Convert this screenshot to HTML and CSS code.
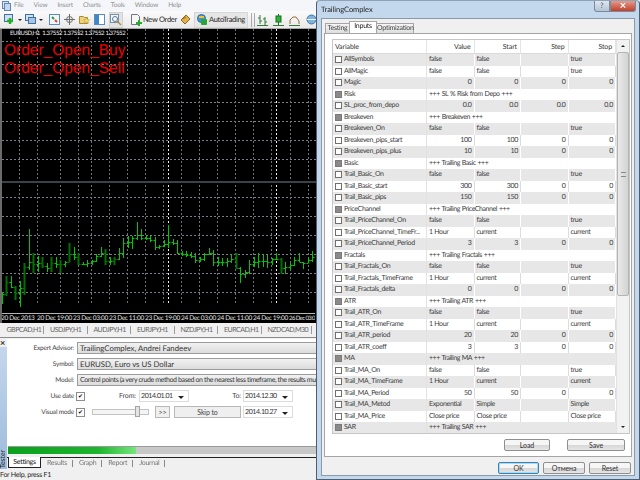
FILE: index.html
```html
<!DOCTYPE html>
<html lang="en">
<head>
    <meta charset="UTF-8">
    <title>TrailingComplex</title>
    <link rel="stylesheet" href="styles.css">
</head>
<body>
    <div class="desktop">
        <div class="terminal">
            <div class="menubar">
                <svg class="app-icon" width="9" height="10" viewBox="0 0 9 10"><rect x="0.5" y="0.5" width="6" height="7" fill="#dfe9f5" stroke="#5f86b5"/><rect x="2.5" y="2.5" width="6" height="7" fill="#c6d8ee" stroke="#5f86b5"/></svg>
                <span class="menu">File</span>
                <span class="menu">View</span>
                <span class="menu">Insert</span>
                <span class="menu">Charts</span>
                <span class="menu">Tools</span>
                <span class="menu">Window</span>
                <span class="menu">Help</span>
            </div>

            <div class="toolbar">
                <svg class="tool" width="11" height="11" viewBox="0 0 11 11"><rect x="0.5" y="0.5" width="8" height="7" fill="#cfe0f2" stroke="#3f6fa5"/><path d="M6 4v6M3 7h6" stroke="#1fae2a" stroke-width="2.4"/></svg>
                <span class="caret"></span>
                <svg class="tool tool-second" width="11" height="11" viewBox="0 0 11 11"><rect x="0.5" y="0.5" width="8" height="6" fill="#cfe0f2" stroke="#3f6fa5"/><rect x="3.5" y="3.5" width="7" height="6" fill="#a9c5e6" stroke="#3f6fa5"/></svg>
                <span class="caret"></span>
                <span class="sep"></span>
                <svg class="tool" width="11" height="11" viewBox="0 0 11 11"><rect x="0.5" y="0.5" width="10" height="10" fill="#f2f6fb" stroke="#5b8cc0"/><path d="M3 3l2 2" stroke="#2d9a3a" stroke-width="2"/><path d="M6 6l2 2" stroke="#d2452f" stroke-width="2"/></svg>
                <svg class="tool" width="11" height="11" viewBox="0 0 11 11"><circle cx="5.5" cy="5.5" r="3" fill="none" stroke="#6d6d6d"/><path d="M5.5 0v11M0 5.5h11" stroke="#6d6d6d"/></svg>
                <svg class="tool" width="11" height="11" viewBox="0 0 11 11"><path d="M0.5 2.5h4l1 1h3v6h-8z" fill="#efd27a" stroke="#a98a35"/><path d="M7.5 3.5l1 2 2 .3-1.5 1.4.4 2-1.900-1-1.900 1 .4-2-1.500-1.400 2-.3z" fill="#f3dd6a" stroke="#b09030" stroke-width="0.5"/></svg>
                <svg class="tool" width="11" height="11" viewBox="0 0 11 11"><rect x="0.500" y="0.500" width="10" height="10" fill="#fff" stroke="#5b8cc0"/><rect x="1" y="1" width="4" height="9" fill="#3f86c9"/></svg>
                <span class="tool-on"><svg width="12" height="12" viewBox="0 0 12 12"><rect x="0.5" y="0.5" width="8" height="8" fill="#f4f7fb" stroke="#7a8ea6"/><circle cx="5" cy="5" r="2.500" fill="none" stroke="#5a7a9c"/><path d="M7 7l4 4" stroke="#b08a3a" stroke-width="1.500"/></svg></span>
                <span class="sep"></span>
                <svg class="tool" width="11" height="12" viewBox="0 0 11 12"><path d="M0.500 0.500h6l2 2v8h-8z" fill="#f6f6f6" stroke="#6f7780"/><path d="M8 6v6M5 9h6" stroke="#24a82e" stroke-width="2"/></svg>
                <span class="tool-label">New Order</span>
                <svg class="tool" width="11" height="11" viewBox="0 0 11 11"><path d="M1 6l5-5 4 4-5 5z" fill="#e2b04a" stroke="#8e6a1e"/><path d="M3 5l3-2" stroke="#8e6a1e"/></svg>
                <span class="autotrading">
                    <svg width="10" height="11" viewBox="0 0 10 11"><circle cx="4.500" cy="4.500" r="4" fill="#4a93d6" stroke="#2c6aa5"/><path d="M2 3h5" stroke="#f0c23c" stroke-width="2"/><rect x="4" y="5" width="6" height="6" rx="1" fill="#2aa639"/></svg>
                    <span class="tool-label">AutoTrading</span>
                </span>
                <span class="grip"></span>
                <svg class="tool" width="11" height="12" viewBox="0 0 11 12"><path d="M3 1v9M1 4h2M3 7h2M8 3v8M6 5h2M8 8h2M0 11.500h11" stroke="#37783c" fill="none"/></svg>
                <svg class="tool tool-candle" width="11" height="12" viewBox="0 0 11 12"><path d="M5.500 0v11" stroke="#1d6b26"/><rect x="3" y="2" width="5" height="6" fill="#2fb13c" stroke="#1d6b26"/><path d="M0 11.500h11" stroke="#37783c"/></svg>
                <svg class="tool tool-candle" width="11" height="12" viewBox="0 0 11 12"><path d="M1 10V6l3-3h3l3 4v3" stroke="#9a6a3a" fill="none"/><path d="M0 11.500h11" stroke="#37783c"/></svg>
                <span class="sep sep-globe"></span>
                <svg class="tool" width="10" height="11" viewBox="0 0 10 11"><circle cx="5.500" cy="5.500" r="4.500" fill="#7fb2df" stroke="#3e78ad"/><path d="M1 5.500h9" stroke="#eef5fb"/></svg>
            </div>

            <div class="chart">
                <svg id="chartCanvas" class="chart-canvas" width="314" height="284" viewBox="0 0 314 284"></svg>
                <div class="chart-title">EURUSD,H1&nbsp; 1.37552 1.37552 1.37552 1.37552</div>
                <div class="chart-labels">
                    <div>Order_Open_Buy</div>
                    <div>Order_Open_Sell</div>
                </div>
                <div class="time-axis">
                    <span>20 Dec 2013</span>
                    <span>20 Dec 19:00</span>
                    <span>23 Dec 03:00</span>
                    <span>23 Dec 11:00</span>
                    <span>23 Dec 19:00</span>
                    <span>24 Dec 03:00</span>
                    <span>24 Dec 11:00</span>
                    <span>24 Dec 19:00</span>
                    <span class="time-last">26 Dec 03:00</span>
                </div>
            </div>

            <div class="chart-tabs">
                <span>GBPCAD,H1</span>
                <span>USDJPY,H1</span>
                <span>AUDJPY,H1</span>
                <span>EURJPY,H1</span>
                <span>NZDJPY,H1</span>
                <span>EURCAD,H1</span>
                <span class="tab-wide">NZDCAD,M30</span>
            </div>

            <div class="tester">
                <div class="tester-strip">
                    <span class="strip-close">×</span>
                    <span class="strip-title">Tester</span>
                </div>
                <div class="tester-main">
                    <div class="tester-form">
                        <div class="form-row">
                            <label class="form-label">Expert Advisor:</label>
                            <div class="combo combo-large">TrailingComplex, Andrei Fandeev</div>
                        </div>
                        <div class="form-row">
                            <label class="form-label">Symbol:</label>
                            <div class="combo combo-large">EURUSD, Euro vs US Dollar</div>
                        </div>
                        <div class="form-row">
                            <label class="form-label">Model:</label>
                            <div class="combo combo-model">Control points (a very crude method based on the nearest less timeframe, the results must</div>
                        </div>
                        <div class="form-row">
                            <label class="form-label">Use date</label>
                            <span class="tick">✔</span>
                            <label class="from-label">From:</label>
                            <div class="date-box">2014.01.01<i class="caret"></i></div>
                            <label class="to-label">To:</label>
                            <div class="date-box">2014.12.30<i class="caret"></i></div>
                        </div>
                        <div class="form-row">
                            <label class="form-label">Visual mode</label>
                            <span class="tick">✔</span>
                            <div class="slider"><span class="slider-thumb"></span></div>
                            <button class="plain-btn fast-btn">&gt;&gt;</button>
                            <button class="plain-btn skip-btn">Skip to</button>
                            <div class="date-box">2014.10.27<i class="caret"></i></div>
                        </div>
                    </div>
                    <div class="progress"><div class="progress-fill"></div></div>
                    <div class="tester-tabs">
                        <span class="tester-tab active">Settings</span>
                        <span class="tester-tab">Results</span>
                        <span class="tester-tab">Graph</span>
                        <span class="tester-tab">Report</span>
                        <span class="tester-tab">Journal</span>
                    </div>
                </div>
            </div>

            <div class="statusbar">For Help, press F1</div>
        </div>

        <div class="dialog">
            <div class="dialog-title">
                <span>TrailingComplex</span>
                <div class="caption-btns">
                    <span class="caption-help">?</span>
                    <span class="caption-close">×</span>
                </div>
            </div>
            <div class="dialog-body">
                <div class="dialog-tabs">
                    <span class="dialog-tab">Testing</span>
                    <span class="dialog-tab active">Inputs</span>
                    <span class="dialog-tab tab-opt">Optimization</span>
                </div>
                <div class="tab-pane">
                    <div class="grid-wrap">
                        <div class="grid">
                            <div class="row head"><span>Variable</span><span>Value</span><span>Start</span><span>Step</span><span>Stop</span></div>
                            <div class="row"><span><i class="cb"></i>AllSymbols</span><span>false</span><span>false</span><span></span><span>true</span></div>
                            <div class="row"><span><i class="cb"></i>AllMagic</span><span>false</span><span>false</span><span></span><span>true</span></div>
                            <div class="row num"><span><i class="cb"></i>Magic</span><span>0</span><span>0</span><span>0</span><span>0</span></div>
                            <div class="row group"><span><i class="cb"></i>Risk</span><span>+++ SL % Risk from Depo +++</span></div>
                            <div class="row num"><span><i class="cb"></i>SL_proc_from_depo</span><span>0.0</span><span>0.0</span><span>0.0</span><span>0.0</span></div>
                            <div class="row group"><span><i class="cb"></i>Breakeven</span><span>+++ Breakeven +++</span></div>
                            <div class="row"><span><i class="cb"></i>Breakeven_On</span><span>false</span><span>false</span><span></span><span>true</span></div>
                            <div class="row num"><span><i class="cb"></i>Breakeven_pips_start</span><span>100</span><span>100</span><span>0</span><span>0</span></div>
                            <div class="row num"><span><i class="cb"></i>Breakeven_pips_plus</span><span>10</span><span>10</span><span>0</span><span>0</span></div>
                            <div class="row group"><span><i class="cb"></i>Basic</span><span>+++ Trailing Basic +++</span></div>
                            <div class="row"><span><i class="cb"></i>Trail_Basic_On</span><span>false</span><span>false</span><span></span><span>true</span></div>
                            <div class="row num"><span><i class="cb"></i>Trail_Basic_start</span><span>300</span><span>300</span><span>0</span><span>0</span></div>
                            <div class="row num"><span><i class="cb"></i>Trail_Basic_pips</span><span>150</span><span>150</span><span>0</span><span>0</span></div>
                            <div class="row group"><span><i class="cb"></i>PriceChannel</span><span>+++ Trailing PriceChannel +++</span></div>
                            <div class="row"><span><i class="cb"></i>Trail_PriceChannel_On</span><span>false</span><span>false</span><span></span><span>true</span></div>
                            <div class="row"><span><i class="cb"></i>Trail_PriceChannel_TimeFr...</span><span>1 Hour</span><span>current</span><span></span><span>current</span></div>
                            <div class="row num"><span><i class="cb"></i>Trail_PriceChannel_Period</span><span>3</span><span>3</span><span>0</span><span>0</span></div>
                            <div class="row group"><span><i class="cb"></i>Fractals</span><span>+++ Trailing Fractals +++</span></div>
                            <div class="row"><span><i class="cb"></i>Trail_Fractals_On</span><span>false</span><span>false</span><span></span><span>true</span></div>
                            <div class="row"><span><i class="cb"></i>Trail_Fractals_TimeFrame</span><span>1 Hour</span><span>current</span><span></span><span>current</span></div>
                            <div class="row num"><span><i class="cb"></i>Trail_Fractals_delta</span><span>0</span><span>0</span><span>0</span><span>0</span></div>
                            <div class="row group"><span><i class="cb"></i>ATR</span><span>+++ Trailing ATR +++</span></div>
                            <div class="row"><span><i class="cb"></i>Trail_ATR_On</span><span>false</span><span>false</span><span></span><span>true</span></div>
                            <div class="row"><span><i class="cb"></i>Trail_ATR_TimeFrame</span><span>1 Hour</span><span>current</span><span></span><span>current</span></div>
                            <div class="row num"><span><i class="cb"></i>Trail_ATR_period</span><span>20</span><span>20</span><span>0</span><span>0</span></div>
                            <div class="row num"><span><i class="cb"></i>Trail_ATR_coeff</span><span>3</span><span>3</span><span>0</span><span>0</span></div>
                            <div class="row group"><span><i class="cb"></i>MA</span><span>+++ Trailing MA +++</span></div>
                            <div class="row"><span><i class="cb"></i>Trail_MA_On</span><span>false</span><span>false</span><span></span><span>true</span></div>
                            <div class="row"><span><i class="cb"></i>Trail_MA_TimeFrame</span><span>1 Hour</span><span>current</span><span></span><span>current</span></div>
                            <div class="row num"><span><i class="cb"></i>Trail_MA_Period</span><span>50</span><span>50</span><span>0</span><span>0</span></div>
                            <div class="row"><span><i class="cb"></i>Trail_MA_Metod</span><span>Exponential</span><span>Simple</span><span></span><span>Simple</span></div>
                            <div class="row"><span><i class="cb"></i>Trail_MA_Price</span><span>Close price</span><span>Close price</span><span></span><span>Close price</span></div>
                            <div class="row group"><span><i class="cb"></i>SAR</span><span>+++ Trailing SAR +++</span></div>
                        </div>
                        <div class="scrollbar">
                            <span class="arrow up"></span>
                            <div class="scroll-track"><div class="scroll-thumb"><span class="scroll-grip"></span></div></div>
                            <span class="arrow down"></span>
                        </div>
                    </div>
                    <div class="pane-buttons">
                        <button class="btn load-btn">Load</button>
                        <button class="btn save-btn">Save</button>
                    </div>
                </div>
                <div class="dialog-buttons">
                    <button class="btn ok-btn">OK</button>
                    <button class="btn cancel-btn">Отмена</button>
                    <button class="btn reset-btn">Reset</button>
                </div>
            </div>
        </div>
    </div>
    <script src="chart.js"></script>
</body>
</html>
```

FILE: styles.css
```css
* {
    margin: 0;
    padding: 0;
    box-sizing: border-box;
}

html, body {
    width: 640px;
    height: 480px;
    overflow: hidden;
}

body {
    font-family: 'Lato', 'Liberation Sans', Arial, sans-serif;
    font-size: 7px;
    letter-spacing: -0.1px;
    color: #333;
    text-rendering: geometricPrecision;
}

.desktop {
    position: relative;
    width: 640px;
    height: 480px;
    background: #f0f0f0;
    filter: blur(0.3px);
}

button {
    letter-spacing: inherit;
}

/* main terminal window */
.terminal {
    width: 316px;
    height: 480px;
    display: flex;
    flex-direction: column;
    background: #f0f0f0;
}

.menubar {
    height: 11px;
    display: flex;
    align-items: center;
    padding-left: 2px;
    color: #8f8f8f;
    background: #f4f6f9;
    font-size: 6.5px;
    letter-spacing: -0.15px;
}

.app-icon {
    margin-right: 3px;
}

.menu {
    margin-right: 10px;
}

.toolbar {
    height: 18px;
    display: flex;
    align-items: center;
    padding-left: 4px;
    background: linear-gradient(#fbfbfb, #e9e9e9);
    border-bottom: 1px solid #a8a8a8;
    overflow: hidden;
    flex-shrink: 0;
}

.tool {
    margin-right: 4px;
    flex-shrink: 0;
}

.tool-second {
    margin-left: 1px;
}

.tool-candle {
    margin-left: 1px;
}

.caret {
    width: 0;
    height: 0;
    border-left: 2px solid transparent;
    border-right: 2px solid transparent;
    border-top: 2px solid #222;
    margin-left: -1px;
    margin-right: 2px;
}

.sep {
    width: 1px;
    height: 14px;
    background: #c4c4c4;
    margin: 0 4px 0 0;
}

.sep-globe {
    margin-right: 2px;
}

.tool-on {
    display: flex;
    padding: 0;
    margin: 0 4px 0 0;
    background: #e3e3e3;
    border: 1px solid #d0d0d0;
    height: 16px;
    width: 14px;
    align-items: center;
}

.tool-label {
    width: 33px;
    color: #222;
    font-size: 7.5px;
    letter-spacing: -0.3px;
    white-space: nowrap;
    margin-right: 4px;
    margin-left: -3px;
}

.autotrading {
    display: flex;
    align-items: center;
    gap: 2px;
    height: 16px;
    width: 54px;
    padding: 0 0 0 2px;
    background: #e6e6e6;
    border: 1px solid #d6d6d6;
    margin-left: -1px;
    margin-right: 3px;
    flex-shrink: 0;
}

.autotrading .tool-label {
    width: auto;
    margin-left: 0;
    margin-right: 0;
}

.grip {
    width: 4px;
    height: 14px;
    border-left: 1px solid #a9a9a9;
    border-right: 1px solid #a9a9a9;
    margin-right: 2px;
    flex-shrink: 0;
}

/* chart */
.chart {
    position: relative;
    height: 294px;
    background: #000;
    border-left: 2px solid #6b6b6b;
    flex-shrink: 0;
    overflow: hidden;
}

.chart-canvas {
    display: block;
}

.chart-title {
    position: absolute;
    left: 8px;
    top: 0;
    color: #f2f2f2;
    font-size: 6px;
    letter-spacing: -0.35px;
    line-height: 9px;
    white-space: nowrap;
}

.chart-labels {
    position: absolute;
    left: 2px;
    top: 13px;
    color: #f00000;
    font-family: 'Liberation Sans', Arial, sans-serif;
    font-size: 15.5px;
    letter-spacing: 0;
    line-height: 17.500px;
}

.time-axis {
    position: absolute;
    left: -1px;
    bottom: 0;
    width: 314px;
    height: 10px;
    display: flex;
    color: #e2e2e2;
    font-size: 6.5px;
    letter-spacing: -0.35px;
    line-height: 10px;
    border-top: 1px solid #b5b5b5;
}

.time-axis span {
    width: 36px;
    flex-shrink: 0;
    white-space: nowrap;
}

.time-axis .time-last {
    width: 26px;
    letter-spacing: -0.6px;
    font-size: 6px;
    overflow: hidden;
}

.chart-tabs {
    height: 15px;
    display: flex;
    align-items: center;
    padding-left: 0.5px;
    color: #666;
    letter-spacing: -0.5px;
    border-bottom: 1px solid #8c8c8c;
    flex-shrink: 0;
}

.chart-tabs span {
    width: 43.500px;
    padding-left: 6px;
    border-right: 1px solid #9a9a9a;
    line-height: 8px;
    white-space: nowrap;
}

.chart-tabs .tab-wide {
    width: 50.500px;
}

/* strategy tester */
.tester {
    flex: 1;
    display: flex;
    min-height: 0;
    padding-top: 1px;
}

.tester-strip {
    width: 7px;
    display: flex;
    flex-direction: column;
    justify-content: space-between;
    background: linear-gradient(#f0f0f0 0 8px, #c4d7ec 8px, #9dbbdb);
    color: #222;
}

.strip-close {
    font-size: 9px;
    line-height: 8px;
    font-weight: bold;
}

.strip-title {
    writing-mode: vertical-rl;
    transform: rotate(180deg);
    line-height: 7px;
    padding-top: 1px;
}

.tester-main {
    flex: 1;
    min-width: 0;
    display: flex;
    flex-direction: column;
    background: #f0f0f0;
}

.tester-form {
    height: 107px;
    background: #fff;
    padding-top: 3px;
    overflow: hidden;
}

.form-row {
    display: flex;
    align-items: center;
    height: 12px;
    margin-bottom: 4px;
    white-space: nowrap;
}

.form-label {
    width: 69px;
    flex-shrink: 0;
    text-align: right;
    padding-right: 2px;
    font-size: 6.5px;
    letter-spacing: -0.2px;
    color: #444;
}

.combo {
    flex: 1;
    min-width: 0;
    height: 12px;
    line-height: 11px;
    padding-left: 2px;
    margin-left: 1px;
    overflow: hidden;
    background: linear-gradient(#f2f2f2, #dcdcdc);
    border: 1px solid #9c9c9c;
    border-right: none;
    color: #333;
}

.combo-large {
    font-size: 7.8px;
    letter-spacing: 0;
}

.combo-model {
    letter-spacing: -0.39px;
}

.tick {
    width: 9px;
    height: 9px;
    border: 1px solid #8d8d8d;
    font-family: 'DejaVu Sans', sans-serif;
    font-size: 6px;
    line-height: 7px;
    text-align: center;
    color: #111;
    flex-shrink: 0;
}

.from-label {
    width: 51px;
    text-align: right;
    margin-right: 3px;
    color: #444;
}

.to-label {
    width: 52px;
    text-align: right;
    margin-right: 2px;
    color: #444;
}

.date-box {
    position: relative;
    width: 50px;
    height: 12px;
    line-height: 11px;
    padding-left: 1px;
    letter-spacing: -0.4px;
    background: #fff;
    border: 1px solid #dcdcdc;
    color: #333;
    flex-shrink: 0;
}

.date-box .caret {
    position: absolute;
    right: 4px;
    top: 5px;
    margin: 0;
    border-left-width: 3px;
    border-right-width: 3px;
    border-top-width: 3px;
}

.slider {
    position: relative;
    width: 57px;
    height: 6px;
    margin: 0 6px 0 7px;
    background: #f4f4f4;
    border: 1px solid #c2c2c2;
    flex-shrink: 0;
}

.slider-thumb {
    position: absolute;
    left: 42px;
    top: -4px;
    width: 5px;
    height: 11px;
    background: #e4e4e4;
    border: 1px solid #a3a3a3;
}

.plain-btn {
    height: 12px;
    font: inherit;
    color: #444;
    background: #efefef;
    border: 1px solid #b8b8b8;
    flex-shrink: 0;
}

.fast-btn {
    width: 15px;
    margin-right: 4px;
}

.skip-btn {
    width: 67px;
    margin-right: 2px;
}

.progress {
    height: 8px;
    background: #c8c8c8;
    border-top: 1px solid #9a9a9a;
    margin-left: 1px;
    flex-shrink: 0;
}

.progress-fill {
    width: 128px;
    height: 100%;
    background: linear-gradient(90deg, #0b9f1d 0, #1cb52c 70%, #74e67c 100%);
}

.tester-tabs {
    display: flex;
    height: 11px;
    margin-top: 3px;
    padding-left: 1px;
    color: #777;
    letter-spacing: -0.3px;
    border-top: 1px solid #222;
    flex-shrink: 0;
}

.tester-tab {
    padding: 0 6px;
    line-height: 10px;
    position: relative;
}

.tester-tab::after {
    content: '';
    position: absolute;
    right: 0;
    top: 2px;
    height: 7px;
    border-right: 1px solid #888;
}

.tester-tab.active {
    width: 33px;
    padding: 0;
    text-align: center;
    color: #111;
    background: #fff;
    border: 1px solid #222;
    border-top: none;
    margin-top: -1px;
    height: 11px;
}

.tester-tab.active::after {
    display: none;
}

.statusbar {
    height: 11px;
    flex-shrink: 0;
    letter-spacing: -0.25px;
    line-height: 13px;
    color: #222;
    white-space: nowrap;
    overflow: hidden;
}

/* parameters dialog, a window over the terminal */
.dialog {
    position: absolute;
    left: 316px;
    top: 0;
    width: 324px;
    height: 480px;
    display: flex;
    flex-direction: column;
    background: #c3d8ec;
    border: 1px solid #4e5f70;
    border-top: 1px solid #8fa3b5;
    border-radius: 4px 4px 0 0;
    padding: 0 4px 3px 4px;
}

.dialog-title {
    position: relative;
    height: 17px;
    line-height: 17px;
    font-size: 7.5px;
    letter-spacing: -0.05px;
    color: #222;
    flex-shrink: 0;
}

.caption-btns {
    position: absolute;
    right: -1px;
    top: 0;
    display: flex;
}

.caption-help,
.caption-close {
    height: 11px;
    line-height: 10px;
    text-align: center;
    border: 1px solid #7b8a99;
    border-top: none;
}

.caption-help {
    width: 16px;
    background: linear-gradient(#dfe8f1, #b4c4d4);
    color: #555;
    border-radius: 0 0 0 3px;
}

.caption-close {
    width: 26px;
    background: linear-gradient(#e59a8b, #c1402c);
    color: #fff;
    font-weight: bold;
    font-size: 11px;
    border-radius: 0 0 3px 0;
}

.dialog-body {
    flex: 1;
    min-height: 0;
    display: flex;
    flex-direction: column;
    background: #f0f0f0;
    border: 1px solid #8b9aa9;
    padding: 3px 2px 0 2px;
}

.dialog-tabs {
    display: flex;
    height: 11px;
    padding-left: 1px;
    align-items: flex-end;
    flex-shrink: 0;
    position: relative;
    z-index: 1;
    letter-spacing: -0.25px;
}

.dialog-tab {
    width: 25px;
    height: 10px;
    line-height: 9px;
    text-align: center;
    background: linear-gradient(#f5f5f5, #dedede);
    border: 1px solid #a5a5a5;
    border-bottom: none;
    color: #444;
}

.dialog-tab.tab-opt {
    width: 38px;
}

.dialog-tab.active {
    width: 28px;
    height: 12px;
    background: #fff;
    color: #222;
    margin: 0 -1px;
    z-index: 1;
    line-height: 9px;
}

.tab-pane {
    height: 424px;
    flex-shrink: 0;
    background: #fff;
    border: 1px solid #a5a5a5;
    padding: 5px 1px 0 7px;
}

.grid-wrap {
    display: flex;
    height: 395px;
    width: 298px;
    border: 1px solid #c6c6c6;
}

.grid {
    width: 283px;
    flex-shrink: 0;
    overflow: hidden;
}

.row {
    display: grid;
    grid-template-columns: 94px 47.500px 46.500px 47.500px 47.500px;
    height: 11.500px;
    line-height: 11.500px;
    letter-spacing: -0.35px;
    color: #3c3c3c;
    white-space: nowrap;
}

.row:nth-child(even) {
    background: #e7e7e7;
}

.row span {
    display: block;
    padding-left: 2px;
    border-right: 1px solid #dcdcdc;
    overflow: hidden;
}

.row:nth-child(even) span {
    border-right-color: #fff;
}

.row span:first-child {
    display: flex;
    align-items: center;
    border-right-color: #e2e2e2;
}

.row.group span:last-child {
    grid-column: 2 / 6;
    border-right: none;
    letter-spacing: -0.45px;
    word-spacing: 0.6px;
}

.row.num span:not(:first-child) {
    text-align: right;
    padding-right: 2px;
}

.row.head {
    height: 14px;
    line-height: 14px;
    letter-spacing: -0.1px;
    background: #fff;
    color: #333;
    border-bottom: 1px solid #dadada;
}

.row.head span {
    text-align: right;
    padding-right: 3px;
    border-right-color: #e4e4e4;
}

.row.head span:first-child {
    padding-right: 0;
}

.cb {
    width: 7px;
    height: 7px;
    margin-right: 2px;
    border: 1px solid #6f6f6f;
    background: #fff;
    flex-shrink: 0;
}

.group .cb {
    background: #8a8a8a;
    border-color: #7a7a7a;
}

.scrollbar {
    flex: 1;
    display: flex;
    flex-direction: column;
    align-items: center;
    background: #f2f2f2;
    border-left: 1px solid #e2e2e2;
}

.arrow {
    width: 0;
    height: 0;
    margin: 5px 0;
    border-left: 2px solid transparent;
    border-right: 2px solid transparent;
    flex-shrink: 0;
}

.arrow.up {
    border-bottom: 2px solid #222;
}

.arrow.down {
    border-top: 2px solid #222;
}

.scroll-track {
    flex: 1;
    width: 100%;
}

.scroll-thumb {
    height: 244px;
    display: flex;
    align-items: center;
    justify-content: center;
    background: linear-gradient(90deg, #eaeaea, #d2d2d2);
    border: 1px solid #b4b4b4;
    border-radius: 2px;
}

.scroll-grip {
    width: 5px;
    height: 5px;
    border-top: 1px solid #888;
    border-bottom: 1px solid #888;
}

.pane-buttons {
    display: flex;
    justify-content: flex-end;
    gap: 17px;
    margin-top: 5px;
    padding-right: 5px;
}

.btn {
    height: 12px;
    font: inherit;
    color: #333;
    background: linear-gradient(#f6f6f6 45%, #d8d8d8 55%, #e6e6e6);
    border: 1px solid #8f8f8f;
    border-radius: 2px;
    line-height: 10px;
}

.load-btn {
    width: 46px;
}

.save-btn {
    width: 58px;
}

.dialog-buttons {
    display: flex;
    justify-content: flex-end;
    gap: 4px;
    margin-top: 5px;
    padding-right: 1px;
}

.ok-btn {
    width: 41px;
    border-color: #3c7fb1;
    box-shadow: inset 0 0 0 1px #a5dcf5;
}

.cancel-btn,
.reset-btn {
    width: 42px;
}
```

FILE: chart.js
```js
// bars read off the chart: [high y, low y, dark (down) bar]
const bars = [
    [292, 304, 0], [276, 296, 1], [276, 288, 0], [286, 300, 1], [281, 307, 0], [263, 295, 1],
    [229, 270, 0], [253, 273, 1], [256, 272, 0], [257, 268, 1], [263, 272, 0], [257, 272, 1],
    [257, 268, 0], [260, 273, 1], [261, 267, 0], [243, 262, 1], [247, 260, 0], [253, 265, 1],
    [262, 265, 0], [260, 267, 0], [260, 265, 0], [254, 262, 0], [247, 257, 0], [249, 265, 1],
    [257, 265, 0], [257, 265, 1], [248, 260, 0], [238, 258, 0], [236, 248, 0], [236, 249, 0],
    [222, 240, 0], [229, 240, 0], [235, 240, 0], [236, 242, 0], [237, 250, 0], [245, 249, 0],
    [240, 247, 0], [225, 248, 0], [239, 245, 0], [240, 254, 0], [251, 256, 0], [251, 257, 0],
    [252, 258, 0], [253, 263, 0], [257, 262, 0], [253, 261, 0], [248, 255, 0], [250, 266, 0],
    [257, 266, 0], [258, 266, 0], [258, 267, 0], [254, 263, 0], [253, 269, 1], [267, 283, 0],
    [270, 278, 0], [260, 274, 0], [257, 267, 0], [253, 268, 0], [255, 267, 0], [255, 268, 0],
    [258, 265, 0], [253, 260, 0], [258, 274, 1], [262, 274, 0], [263, 270, 0], [257, 266, 0],
    [253, 262, 0], [262, 269, 0], [257, 263, 0], [251, 262, 0]
];

const hLines = [41, 64, 83, 102, 121, 140, 159, 197, 216, 235, 254, 273, 292];
const vLines = [19, 37, 60, 78, 91, 109, 127, 145, 163, 181, 199, 217, 235, 253, 271, 290, 308];
const brightLines = [168, 276];

// page y of the top of the svg, bars and lines above are in page coordinates
const TOP = 29;
const LEFT = 2;

const canvas = document.getElementById('chartCanvas');
let svg = '';

hLines.forEach(y => {
    svg += `<path d="M0 ${y - TOP + 0.5}H314" stroke="#7b8088" stroke-dasharray="2 2"/>`;
});
vLines.forEach(x => {
    svg += `<path d="M${x - LEFT + 0.5} 0V274" stroke="#6e727a" stroke-dasharray="2 2"/>`;
});
brightLines.forEach(x => {
    svg += `<path d="M${x - LEFT + 0.5} 0V274" stroke="#eeeeee" stroke-dasharray="2 2"/>`;
});
svg += `<path d="M0 ${182 - TOP}H314" stroke="#3a4247" stroke-width="2"/>`;

let prevClose = bars[0][0] + 4;
bars.forEach((bar, i) => {
    const next = bars[i + 1] || bar;
    const x = Math.round(1.7 + 4.5 * i) - LEFT + 0.5;
    const close = Math.round((Math.max(bar[0], next[0]) + Math.min(bar[1], next[1])) / 2);
    const open = Math.min(Math.max(prevClose, bar[0]), bar[1]);
    const color = bar[2] ? '#007000' : '#00c800';
    const width = bar[2] ? 2 : 1;
    svg += `<path d="M${x} ${bar[0] - TOP}V${bar[1] - TOP}" stroke="${color}" stroke-width="${width}"/>`;
    svg += `<path d="M${x - 2} ${open - TOP + 0.5}H${x}M${x} ${close - TOP + 0.5}H${x + 2}" stroke="${color}"/>`;
    prevClose = close;
});

canvas.innerHTML = svg;
```
